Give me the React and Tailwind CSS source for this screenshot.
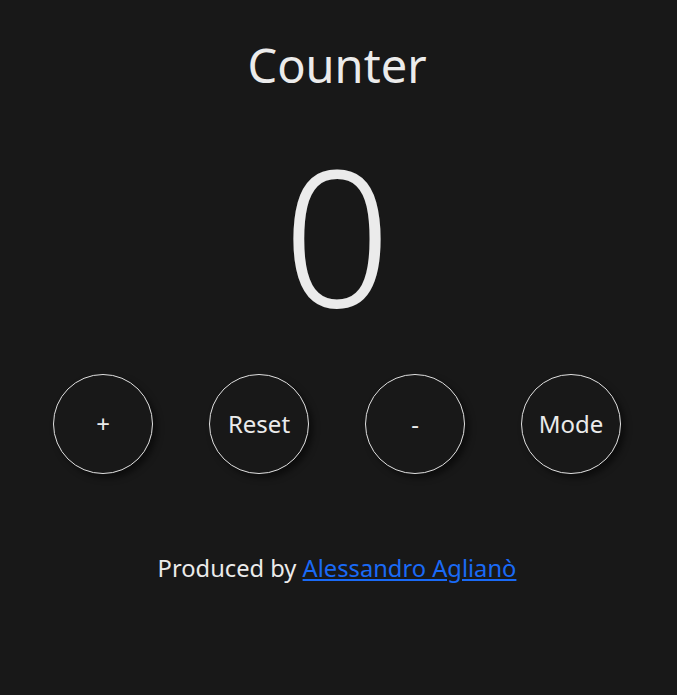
export default function App() {
  const buttons = ["+", "Reset", "-", "Mode"];
  return (
    <div
      className="min-h-[695px] bg-[#181818] text-[#ebebeb] flex flex-col items-center pr-[3px]"
      style={{ fontFamily: '"Noto Sans", "Open Sans", sans-serif' }}
    >
      <h1 className="mt-[34px] text-[47px] leading-[62px]">Counter</h1>
      <div className="mt-[28px] text-[190px] leading-[220px] font-light">0</div>
      <div className="mt-[30px] flex gap-[56px]">
        {buttons.map((b) => (
          <button
            key={b}
            className="w-[100px] h-[100px] rounded-full border border-[#e0e0e0] text-[24px] text-[#ebebeb] shadow-[4px_4px_6px_rgba(0,0,0,0.5)]"
          >
            {b}
          </button>
        ))}
      </div>
      <p className="mt-[78px] text-[23.7px] leading-[32px]">
        Produced by{" "}
        <a href="#" className="text-[#1a6af6] underline">
          Alessandro Aglianò
        </a>
      </p>
    </div>
  );
}
